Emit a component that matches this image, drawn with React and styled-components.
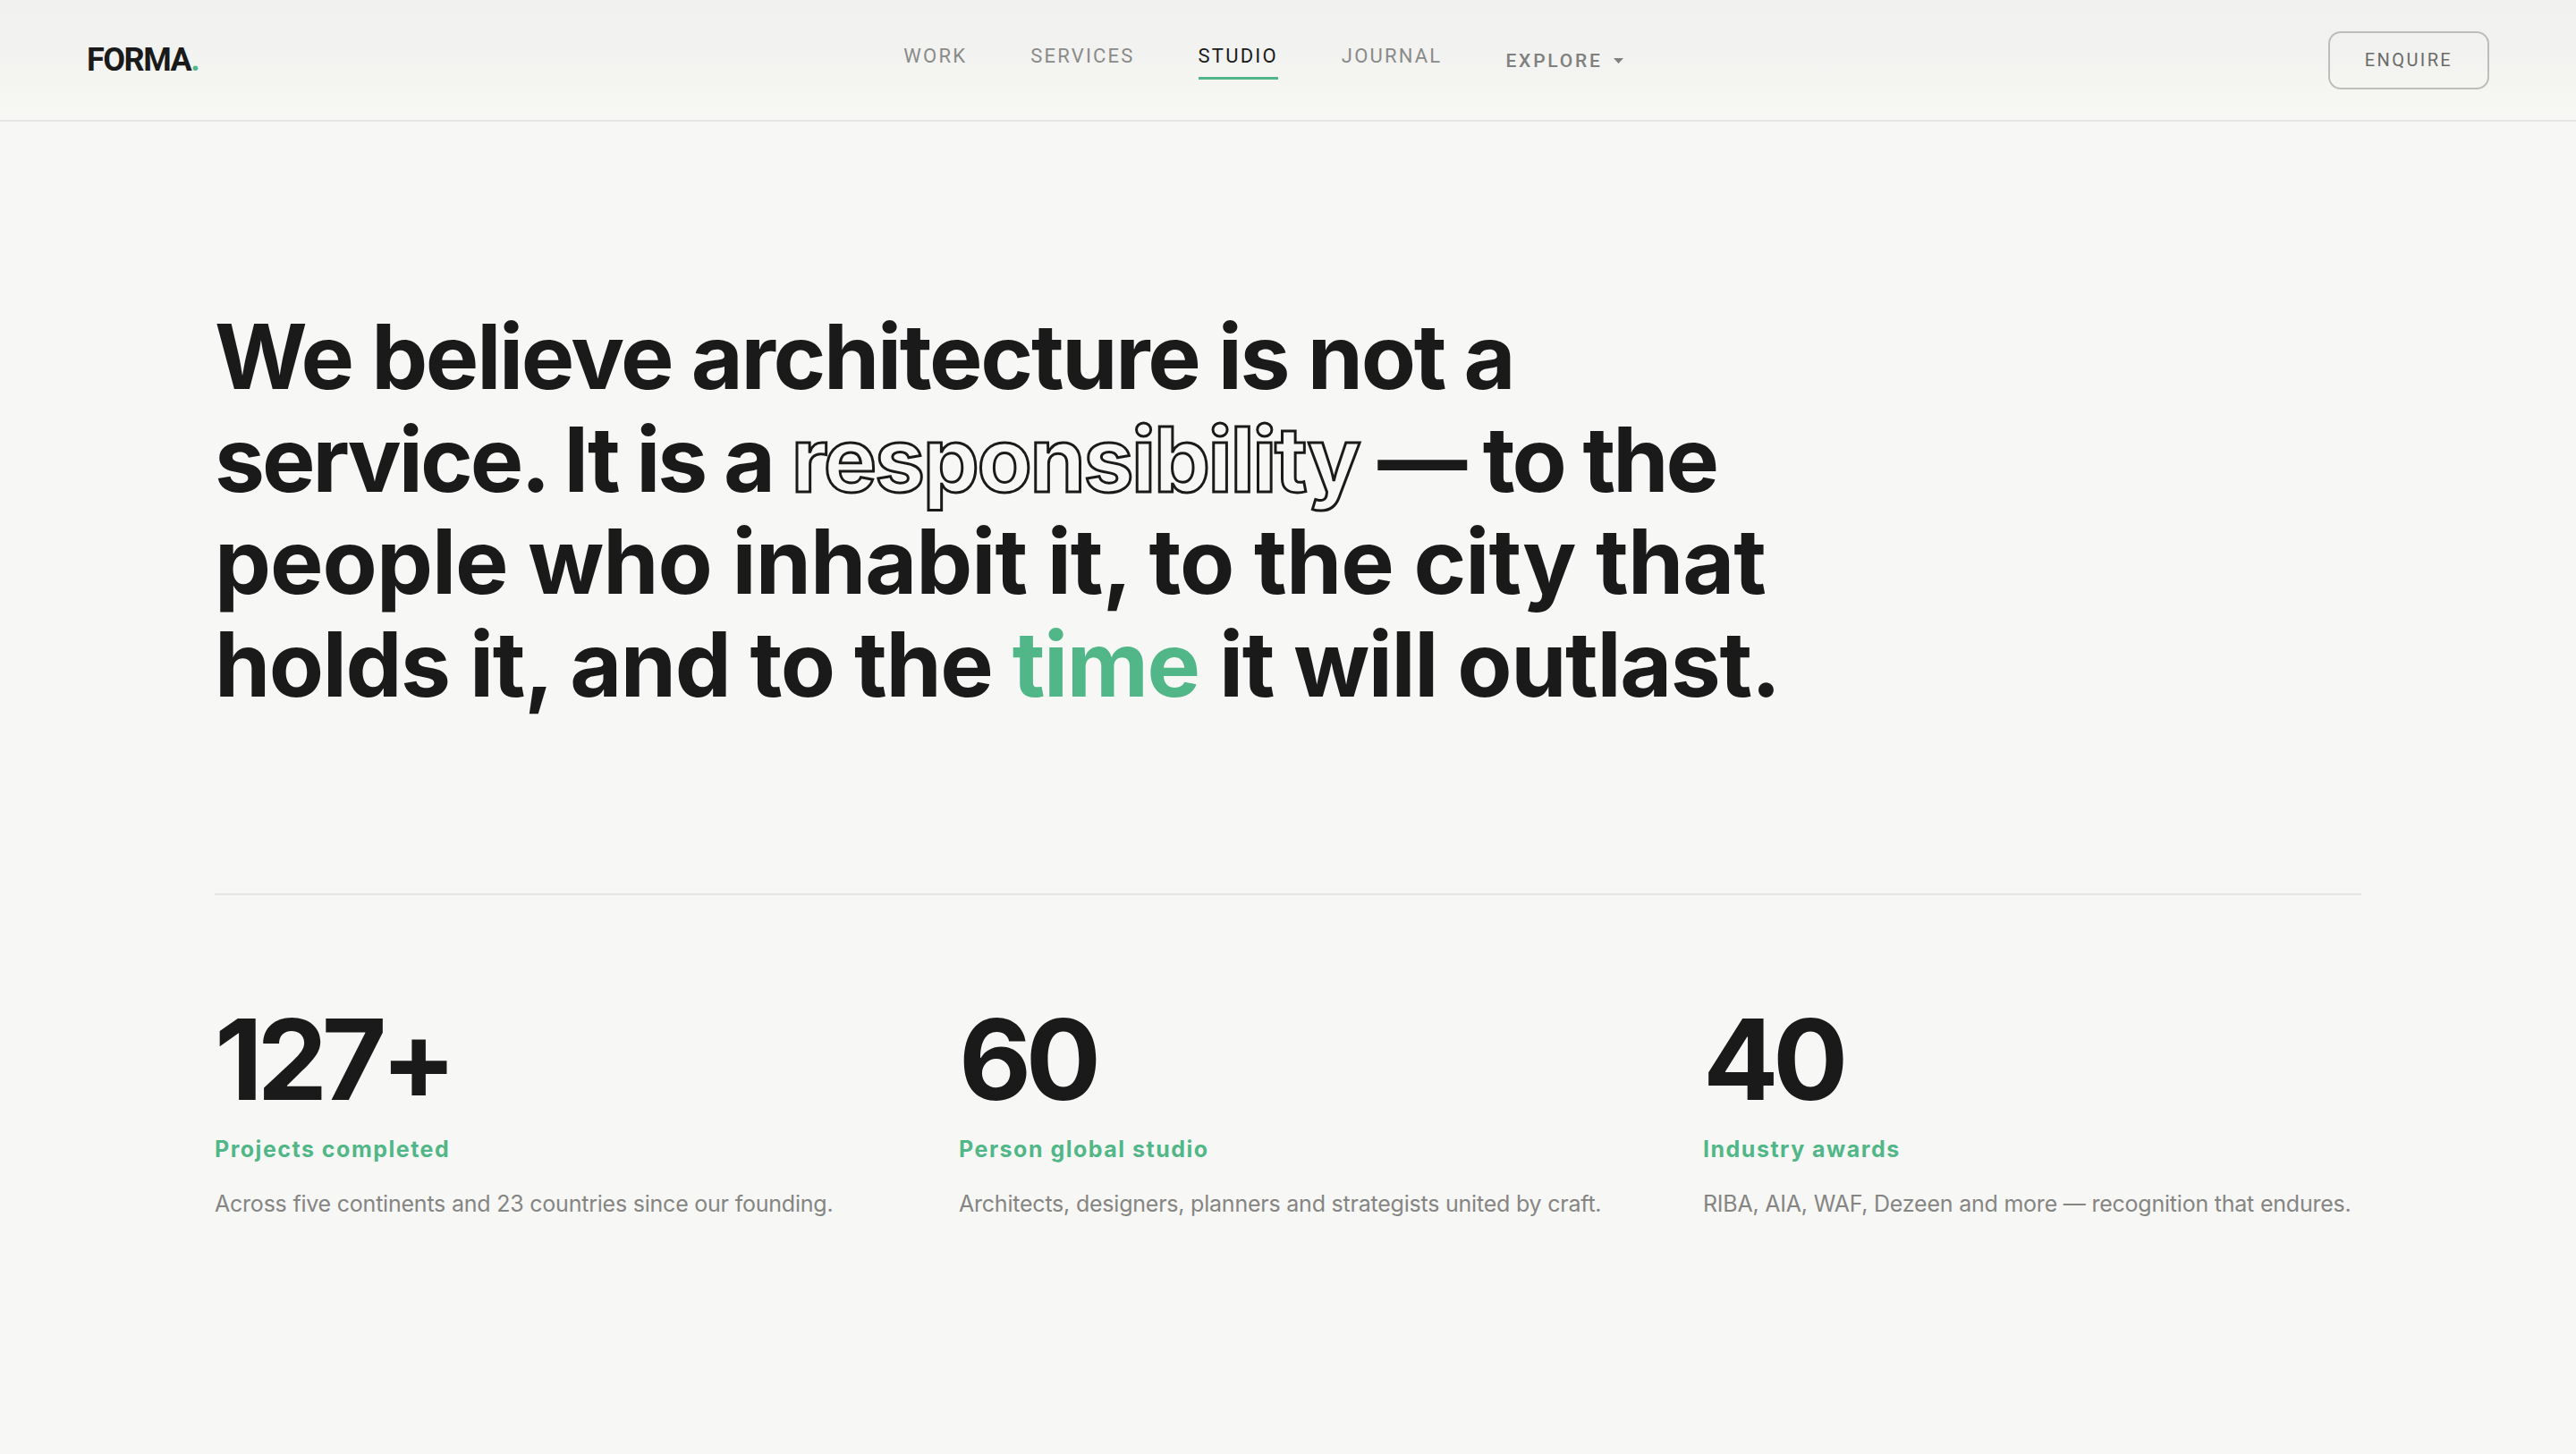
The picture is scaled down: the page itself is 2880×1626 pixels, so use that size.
import React from 'react';
import styled, { createGlobalStyle } from 'styled-components';

const GlobalStyle = createGlobalStyle`
    html, body {
        margin: 0;
        padding: 0;
        background: #f7f7f5;
    }
`;

const Page = styled.div`
    min-height: 1626px;
    background: #f7f7f5;
    color: #1a1a1a;
    font-family: Inter, "Liberation Sans", sans-serif;
`;

const Header = styled.header`
    height: 134px;
    padding: 0 97px;
    display: flex;
    justify-content: space-between;
    align-items: center;
    background: linear-gradient(to bottom, #f1f1ef 0%, #f2f2f0 45%, #f6f6f3 80%, #f7f7f5 100%);
    border-bottom: 2px solid #e6e6e4;
`;

const Logo = styled.div`
    font-family: Roboto, sans-serif;
    font-size: 36px;
    font-weight: 700;
    letter-spacing: -1.5px;

    span {
        color: #52b788;
    }
`;

const Nav = styled.nav`
    display: flex;
    align-items: flex-start;
    gap: 71px;
    margin-top: 5px;
`;

const NavLink = styled.a`
    display: block;
    padding-bottom: 10px;
    font-family: Roboto, sans-serif;
    font-size: 22px;
    line-height: 26px;
    letter-spacing: 2.2px;
    color: ${({ $active }) => ($active ? '#1a1a1a' : '#8a8a88')};
    border-bottom: 3px solid ${({ $active }) => ($active ? '#52b788' : 'transparent')};
`;

const DropdownLink = styled.a`
    display: flex;
    align-items: center;
    gap: 12px;
    margin-top: 5px;
    font-family: Roboto, sans-serif;
    font-size: 21px;
    font-weight: 500;
    line-height: 26px;
    letter-spacing: 2.8px;
    color: #808080;

    svg {
        display: block;
    }
`;

const EnquireButton = styled.button`
    width: 180px;
    height: 65px;
    background: transparent;
    border: 2px solid #bdbdbb;
    border-radius: 14px;
    font-family: Roboto, sans-serif;
    font-size: 20px;
    letter-spacing: 2.4px;
    color: #6b6b69;
`;

const Main = styled.main`
    padding: 206px 240px 0;
`;

const Statement = styled.h1`
    margin: 0;
    font-size: 100px;
    font-weight: 700;
    line-height: 114.6px;
    color: #1a1a1a;
`;

const StatementLine = styled.span`
    display: block;
    letter-spacing: ${({ $tracking }) => $tracking}px;
`;

const Outlined = styled.span`
    color: #f7f7f5;
    font-weight: 700;
    letter-spacing: -2.3px;
    -webkit-text-stroke: 3px #1a1a1a;
`;

const Accent = styled.span`
    color: #52b788;
`;

const Stats = styled.section`
    margin-top: 199px;
    padding-top: 119px;
    border-top: 2px solid #e4e4e2;
    display: grid;
    grid-template-columns: repeat(3, 736px);
    column-gap: 96px;
`;

const StatNumber = styled.div`
    font-size: 125px;
    font-weight: 700;
    line-height: 130px;
    letter-spacing: -6.5px;
    color: #1a1a1a;
`;

const Label = styled.div`
    margin-top: 19px;
    font-size: 25px;
    font-weight: 700;
    line-height: 32px;
    letter-spacing: 1.5px;
    color: #52b788;
`;

const Description = styled.p`
    margin: 27px 0 0;
    font-size: 25px;
    line-height: 36px;
    letter-spacing: -0.22px;
    white-space: nowrap;
    color: #858583;
`;

const STATS = [
    { value: '127+', label: 'Projects completed', text: 'Across five continents and 23 countries since our founding.' },
    { value: '60', label: 'Person global studio', text: 'Architects, designers, planners and strategists united by craft.' },
    { value: '40', label: 'Industry awards', text: 'RIBA, AIA, WAF, Dezeen and more — recognition that endures.' },
];

const App = () => (
    <Page>
        <GlobalStyle />
        <Header>
            <Logo>FORMA<span>.</span></Logo>
            <Nav>
                <NavLink>WORK</NavLink>
                <NavLink>SERVICES</NavLink>
                <NavLink $active>STUDIO</NavLink>
                <NavLink>JOURNAL</NavLink>
                <DropdownLink>
                    EXPLORE
                    <svg width="11" height="6" viewBox="0 0 11 6"><path d="M0 0h11L5.500 6z" fill="#808080" /></svg>
                </DropdownLink>
            </Nav>
            <EnquireButton>ENQUIRE</EnquireButton>
        </Header>
        <Main>
            <Statement>
                <StatementLine $tracking={-2.3}>We believe architecture is not a</StatementLine>
                <StatementLine $tracking={-3}>service. It is a <Outlined>responsibility</Outlined> — to the</StatementLine>
                <StatementLine $tracking={-1}>people who inhabit it, to the city that</StatementLine>
                <StatementLine $tracking={-1.4}>holds it, and to the <Accent>time</Accent> it will outlast.</StatementLine>
            </Statement>
            <Stats>
                {STATS.map((stat) => (
                    <div key={stat.value}>
                        <StatNumber>{stat.value}</StatNumber>
                        <Label>{stat.label}</Label>
                        <Description>{stat.text}</Description>
                    </div>
                ))}
            </Stats>
        </Main>
    </Page>
);

export default App;
